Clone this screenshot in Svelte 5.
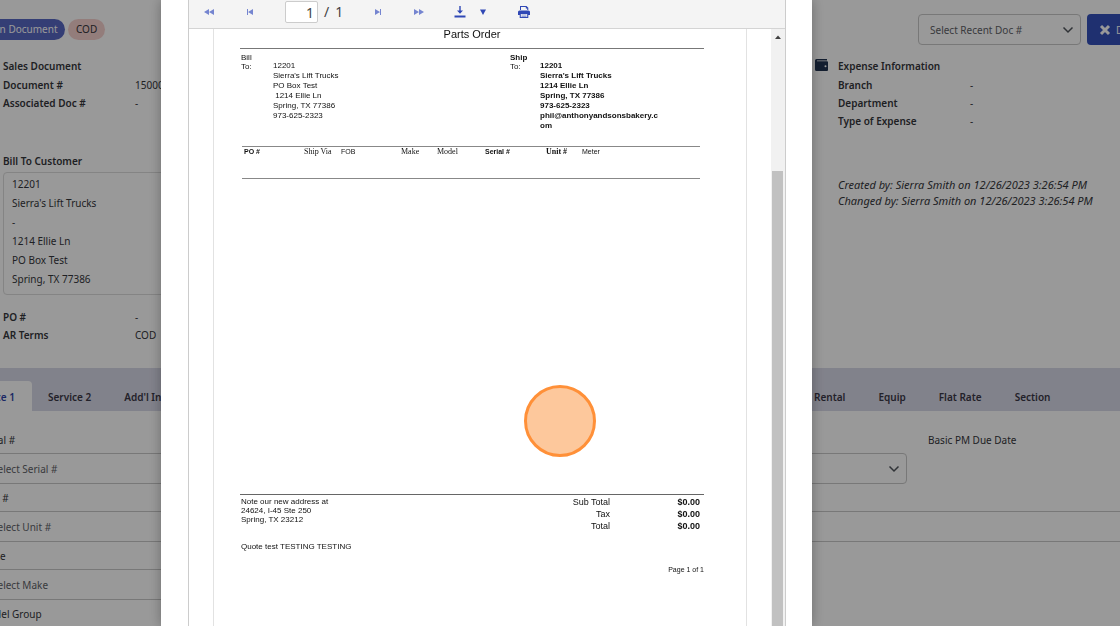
<script>
  const salesDocument = [
    ['Document #', '15000'],
    ['Associated Doc #', '-'],
  ];
  const terms = [
    ['PO #', '-'],
    ['AR Terms', 'COD'],
  ];
  const expense = [
    ['Branch', '-'],
    ['Department', '-'],
    ['Type of Expense', '-'],
  ];
  const customer = ['12201', "Sierra's Lift Trucks", '-', '1214 Ellie Ln', 'PO Box Test', 'Spring, TX 77386', 'United States'];
  const leftTabs = ['Service 2', "Add'l Info"];
  const rightTabs = ['Rental', 'Equip', 'Flat Rate', 'Section'];
  const fields = [
    { id: 'serial', label: 'Serial #', hint: 'Select Serial #', size: 'wide' },
    { id: 'unit', label: 'Unit #', hint: 'Select Unit #', size: 'full' },
    { id: 'make', label: 'Make', hint: 'Select Make', size: 'half' },
    { id: 'group', label: 'Model Group', hint: 'Select Model Group', size: 'half' },
  ];
  const billTo = ['12201', "Sierra's Lift Trucks", 'PO Box Test', '\u00a01214 Ellie Ln', 'Spring, TX 77386', '973-625-2323'];
  const shipTo = ['12201', "Sierra's Lift Trucks", '1214 Ellie Ln', 'Spring, TX 77386', '973-625-2323', 'phil@anthonyandsonsbakery.com'];
  const totals = [
    ['Sub Total', '$0.00'],
    ['Tax', '$0.00'],
    ['Total', '$0.00'],
  ];
  let page = $state('1');
</script>

{#snippet chevron()}
  <svg class="chevron" viewBox="0 0 12 8" aria-hidden="true"><path d="M1.5 1.5 6 6l4.500-4.500" /></svg>
{/snippet}

<div class="app">
  <header class="topbar">
    <span class="pill open">Open Document</span>
    <span class="pill cod">COD</span>
    <div class="recent select">
      <select aria-label="Recent document"><option>Select Recent Doc #</option></select>
      {@render chevron()}
    </div>
    <button class="discard" type="button">
      <svg viewBox="0 0 12 12" aria-hidden="true"><path d="M2 2l8 8M10 2l-8 8" /></svg>
      Discard
    </button>
  </header>

  <div class="info">
    <section class="sales">
      <h2>Sales Document</h2>
      <dl>
        {#each salesDocument as [k, v]}<dt>{k}</dt><dd>{v}</dd>{/each}
      </dl>
      <h2 class="bill-title">Bill To Customer</h2>
      <div class="customer">
        {#each customer as line}<div>{line}</div>{/each}
      </div>
      <dl>
        {#each terms as [k, v]}<dt>{k}</dt><dd>{v}</dd>{/each}
      </dl>
    </section>
    <section class="expense">
      <svg class="wallet" viewBox="0 0 13 12" aria-hidden="true">
        <path d="M1.500 0H12v1.500H2v.8h10a1 1 0 0 1 1 1V11a1 1 0 0 1-1 1H1.500A1.500 1.500 0 0 1 0 10.500v-9A1.500 1.500 0 0 1 1.500 0Z" fill="#20324f" />
        <circle cx="10.500" cy="7.200" r="1" fill="#fff" />
      </svg>
      <div>
        <h2>Expense Information</h2>
        <dl>
          {#each expense as [k, v]}<dt>{k}</dt><dd>{v}</dd>{/each}
        </dl>
        <p class="audit">
          Created by: Sierra Smith on 12/26/2023 3:26:54 PM<br />
          Changed by: Sierra Smith on 12/26/2023 3:26:54 PM
        </p>
      </div>
    </section>
  </div>

  <nav class="tabs">
    <button class="active" type="button">Service 1</button>
    {#each leftTabs as t}<button type="button">{t}</button>{/each}
    <div class="right-tabs">
      {#each rightTabs as t}<button type="button">{t}</button>{/each}
    </div>
  </nav>

  <form class="form">
    {#each fields as f}
      <div class="field {f.size}">
        <label for={f.id}>{f.label}</label>
        <div class="select">
          <select id={f.id}><option>{f.hint}</option></select>
          {@render chevron()}
        </div>
      </div>
      {#if f.size === 'wide'}<div class="due">Basic PM Due Date</div>{/if}
    {/each}
  </form>
</div>

<div class="backdrop">
  <div class="dialog" role="dialog" aria-label="Parts Order">
    <div class="viewer">
      <div class="toolbar">
        <button type="button" aria-label="First page"><svg viewBox="0 0 12 12" class="soft"><path d="M6 3v6L1 6zM11 3v6L6 6z" /></svg></button>
        <button type="button" aria-label="Previous page"><svg viewBox="0 0 12 12" class="soft"><path d="M3 3h1v6H3zM9 3v6L4 6z" /></svg></button>
        <div class="pager">
          <input type="text" aria-label="Page" bind:value={page} />
          <span>/</span><span>1</span>
        </div>
        <button type="button" aria-label="Next page"><svg viewBox="0 0 12 12" class="soft"><path d="M8 3h1v6H8zM3 3v6l5-3z" /></svg></button>
        <button type="button" aria-label="Last page"><svg viewBox="0 0 12 12" class="soft"><path d="M1 3v6l5-3zM6 3v6l5-3z" /></svg></button>
        <div class="export">
          <button type="button" aria-label="Download"><svg viewBox="0 0 12 12"><path d="M5.300 0h1.400v4.500H9L6 7.700 3 4.500h2.300zM.5 9.500h11v2H.5z" /></svg></button>
          <button type="button" aria-label="Download options"><svg viewBox="0 0 12 12"><path d="M3 3.500h6L6 9z" /></svg></button>
        </div>
        <button type="button" aria-label="Print">
          <svg viewBox="0 0 12 12"><path fill-rule="evenodd" d="M2 0h6.500L10.300 1.800V4H9.200V2.500H7.800V1H3v3H2zM1.500 4.500h9A1.500 1.500 0 0 1 12 6v3h-1.700v3H1.700V9H0V6a1.500 1.500 0 0 1 1.500-1.500ZM2.800 8v3h6.400V8zM3.500 8.700h5v.6h-5zM3.500 9.900h5v.6h-5z" /></svg>
        </button>
      </div>
      <div class="scroll">
        <article class="sheet">
          <h1>Parts Order</h1>
          <div class="addresses">
            <div>Bill<br />To:</div>
            <address>{#each billTo as l}<div>{l}</div>{/each}</address>
            <div><b>Ship</b><br />To:</div>
            <address class="ship">{#each shipTo as l}<div>{l}</div>{/each}</address>
          </div>
          <table>
            <colgroup>
              <col class="c60" /><col class="c37" /><col class="c60" /><col class="c36" />
              <col class="c48" /><col class="c61" /><col class="c36" /><col />
            </colgroup>
            <thead>
              <tr>
                <th class="strong">PO #</th><th class="serif">Ship Via</th><th>FOB</th><th class="serif">Make</th>
                <th class="serif">Model</th><th class="strong">Serial #</th><th class="serif strong">Unit #</th><th>Meter</th>
              </tr>
            </thead>
          </table>
          <div class="summary">
            <div class="note">Note our new address at<br />24624, I-45 Ste 250<br />Spring, TX 23212</div>
            <dl>
              {#each totals as [k, v]}<dt>{k}</dt><dd>{v}</dd>{/each}
            </dl>
          </div>
          <p class="quote">Quote test TESTING TESTING</p>
          <p class="count">Page 1 of 1</p>
        </article>
        <div class="scrollbar">
          <svg viewBox="0 0 8 4" aria-hidden="true"><path d="M1 4l3-3.500L7 4z" fill="#404040" /></svg>
          <div class="thumb"></div>
        </div>
      </div>
    </div>
  </div>
  <div class="marker"></div>
</div>

<style>
  :global(body) {
    margin: 0;
    background: #fff;
  }
  .app, .app :global(*), .backdrop, .backdrop :global(*) {
    box-sizing: border-box;
  }
  .app {
    height: 100vh;
    overflow: hidden;
    background: #fff;
    color: #35363b;
    font: 10px/18px "Noto Sans", "Open Sans", sans-serif;
  }
  h1, h2, p, dl, dd {
    margin: 0;
  }
  h2, dt {
    font-size: 10px;
    line-height: 18px;
    font-weight: 600;
  }
  button, select, input {
    font: inherit;
    color: inherit;
  }
  button {
    border: 0;
    background: none;
    padding: 0;
  }
  svg {
    display: block;
  }

  .topbar {
    display: flex;
    align-items: center;
    gap: 3px;
    height: 31px;
    margin: 14px 0 12px -28px;
  }
  .pill {
    border-radius: 11px;
    padding: 0 8px;
    line-height: 21px;
    font-size: 10px;
  }
  .open {
    background: #5868c4;
    color: #fff;
    width: 93px;
    text-align: right;
    white-space: nowrap;
  }
  .cod {
    background: #f6d0ce;
  }
  .select {
    display: grid;
    grid-template-columns: 1fr 26px;
    align-items: center;
    height: 31px;
  }
  .select select {
    grid-area: 1 / 1 / 2 / 3;
    height: 31px;
    width: 100%;
    appearance: none;
    border: 1px solid #c8c8c8;
    border-radius: 4px;
    background: transparent;
    color: #606368;
    padding: 0 11px;
  }
  .chevron {
    grid-area: 1 / 2;
    justify-self: center;
    width: 12px;
    height: 8px;
    fill: none;
    stroke: #50555c;
    stroke-width: 1.5;
  }
  .recent {
    width: 163px;
    margin-left: auto;
  }
  .discard {
    display: flex;
    align-items: center;
    gap: 5px;
    width: 90px;
    height: 31px;
    margin: 0 -57px 0 3px;
    padding-left: 12px;
    border-radius: 4px;
    background: #3550bb;
    color: #fff;
  }
  .discard svg {
    width: 12px;
    height: 12px;
    stroke: #fff;
    stroke-width: 3;
  }

  .info {
    display: flex;
    justify-content: space-between;
    height: 311px;
  }
  .sales {
    width: 50%;
    padding-left: 3px;
  }
  dl {
    display: grid;
    grid-template-columns: 132px 1fr;
  }
  h2 + dl {
    margin-top: 1px;
  }
  .bill-title {
    margin-top: 40px;
  }
  .customer {
    height: 123px;
    margin: 2px 0 13px;
    padding: 2px 8px 0;
    border: 1px solid #dcdcdc;
    border-radius: 4px;
    line-height: 19px;
    overflow: hidden;
  }
  .expense {
    display: flex;
    gap: 10px;
    width: 305px;
  }
  .wallet {
    width: 13px;
    height: 12px;
    margin-top: 2px;
  }
  .audit {
    margin-top: 47px;
    font-size: 11px;
    font-style: italic;
    line-height: 16px;
    white-space: nowrap;
  }

  .tabs {
    display: flex;
    align-items: flex-end;
    gap: 33px;
    height: 43px;
    padding-top: 12px;
    background: #d8d9e8;
  }
  .tabs button {
    height: 30px;
    padding-top: 2px;
    font-weight: 600;
    color: #3a3746;
    white-space: nowrap;
  }
  .tabs .active {
    width: 64px;
    margin: 0 -17px 0 -32px;
    border-radius: 4px 4px 0 0;
    background: #fff;
    color: #2f43a8;
    text-align: right;
    padding-right: 17px;
  }
  .right-tabs {
    display: flex;
    gap: 33px;
    width: 306px;
    margin-left: auto;
  }
  .form {
    display: grid;
    grid-template-columns: 491px 1fr 232px;
    column-gap: 21px;
    margin: 20px -40px 0 -20px;
  }
  .field {
    display: grid;
    grid-template-rows: 22px 31px;
    margin-bottom: 5px;
  }
  .wide {
    grid-column: 1 / 3;
  }
  .full {
    grid-column: 1 / 4;
  }
  .half {
    grid-column: 1 / 2;
  }

  .backdrop {
    position: fixed;
    inset: 0;
    display: flex;
    padding: 0 308px 0 161px;
    background: rgba(0, 0, 0, 0.4);
    overflow: hidden;
    font-family: "Liberation Sans", Arial, sans-serif;
    color: #111;
  }
  .dialog {
    flex: 1;
    padding: 0 26px 0 27px;
    background: #fff;
    box-shadow: 0 0 12px rgba(0, 0, 0, 0.3);
  }
  .viewer {
    display: flex;
    flex-direction: column;
    height: 100%;
    border: solid #ccc;
    border-width: 0 1px;
  }
  .toolbar {
    display: flex;
    align-items: center;
    gap: 29px;
    height: 29px;
    padding: 0 0 4px 14px;
    border-bottom: 1px solid #d4d4d4;
    background: #f4f4f4;
  }
  .toolbar svg {
    width: 12px;
    height: 12px;
    fill: #3048b5;
  }
  .toolbar .soft {
    fill: #7585d0;
  }
  .pager {
    display: flex;
    align-items: center;
    gap: 6px;
    font: 14px/20px "Noto Sans", sans-serif;
    color: #444;
  }
  .pager input {
    width: 33px;
    height: 22px;
    padding: 0 3px;
    border: 1px solid #ccc;
    border-radius: 2px;
    background: #fff;
    text-align: right;
  }
  .export {
    display: flex;
    gap: 11px;
  }
  .scroll {
    flex: 1;
    display: flex;
    justify-content: space-between;
    min-height: 0;
  }
  .sheet {
    flex: 1;
    margin: 0 24px;
    padding: 0 42px 0 26px;
    border: solid #e2e2e2;
    border-width: 0 1px;
    font-size: 8px;
    line-height: 10px;
  }
  h1 {
    font-size: 11px;
    line-height: 11px;
    font-weight: 400;
    text-align: center;
    padding-bottom: 8px;
    border-bottom: 1px solid #777;
  }
  .addresses {
    display: grid;
    grid-template-columns: 32px 237px 30px 120px;
    height: 97px;
    padding: 4px 0 0 1px;
    line-height: 9px;
  }
  address {
    font-style: normal;
    line-height: 10px;
    padding-top: 8px;
  }
  .ship {
    font-weight: 700;
    overflow-wrap: anywhere;
  }
  table {
    width: 458px;
    height: 33px;
    margin-left: 2px;
    table-layout: fixed;
    border-collapse: collapse;
    border: solid #888;
    border-width: 1px 0;
  }
  .c60 { width: 60px; }
  .c37 { width: 37px; }
  .c36 { width: 36px; }
  .c48 { width: 48px; }
  .c61 { width: 61px; }
  th {
    padding: 0 2px;
    font-size: 7px;
    line-height: 10px;
    font-weight: 400;
    text-align: left;
    vertical-align: top;
    white-space: nowrap;
  }
  .serif {
    font-family: "Liberation Serif", serif;
    font-size: 8px;
  }
  .strong {
    font-weight: 700;
  }
  .summary {
    display: flex;
    justify-content: space-between;
    margin-top: 315px;
    padding: 1px 4px 0 1px;
    border-top: 1px solid #666;
  }
  .note {
    padding-top: 1px;
    line-height: 9px;
  }
  .summary dl {
    grid-template-columns: 1fr 90px;
    text-align: right;
  }
  .summary dt, .summary dd {
    font-size: 9px;
    line-height: 12px;
    font-weight: 400;
  }
  .summary dd {
    font-weight: 700;
  }
  .quote {
    margin: 10px 0 0 1px;
  }
  .count {
    margin-top: 13px;
    font-size: 7px;
    text-align: right;
  }
  .scrollbar {
    display: flex;
    flex-direction: column;
    width: 14px;
    padding: 6px 2px 0 1px;
    background: #f1f1f1;
  }
  .scrollbar svg {
    width: 8px;
    height: 4px;
    margin: 0 auto;
  }
  .thumb {
    flex: 1;
    margin-top: 132px;
    background: #c1c1c1;
  }
  .marker {
    position: absolute;
    left: calc(50% - 36px);
    top: 385px;
    width: 72px;
    height: 72px;
    border: 3px solid #ff9038;
    border-radius: 50%;
    background: #fdc89c;
  }
</style>
